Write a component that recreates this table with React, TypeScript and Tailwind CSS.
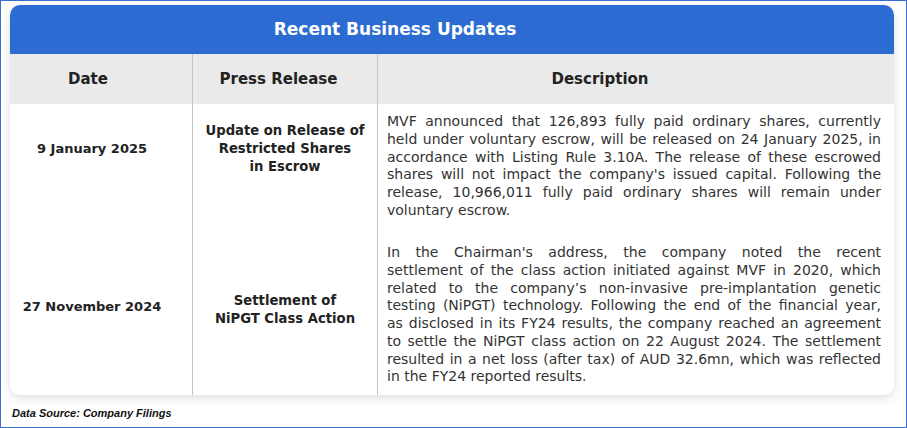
import React from "react";

const BODY_FONT = "font-['DejaVu_Sans',sans-serif]";

const rows = [
    {
        date: "9 January 2025",
        release: ["Update on Release of", "Restricted Shares", "in Escrow"],
        lines: [
            "MVF announced that 126,893 fully paid ordinary shares, currently",
            "held under voluntary escrow, will be released on 24 January 2025, in",
            "accordance with Listing Rule 3.10A. The release of these escrowed",
            "shares will not impact the company's issued capital. Following the",
            "release, 10,966,011 fully paid ordinary shares will remain under",
            "voluntary escrow.",
        ],
        rowClass: "h-[127px]",
        descClass: "pt-[9px]",
        dateClass: "pb-[38px]",
        relClass: "pb-[38px]",
    },
    {
        date: "27 November 2024",
        release: ["Settlement of", "NiPGT Class Action"],
        lines: [
            "In the Chairman's address, the company noted the recent",
            "settlement of the class action initiated against MVF in 2020, which",
            "related to the company\u2019s non-invasive pre-implantation genetic",
            "testing (NiPGT) technology. Following the end of the financial year,",
            "as disclosed in its FY24 results, the company reached an agreement",
            "to settle the NiPGT class action on 22 August 2024. The settlement",
            "resulted in a net loss (after tax) of AUD 32.6mn, which was reflected",
            "in the FY24 reported results.",
        ],
        rowClass: "h-[164px]",
        descClass: "pt-[13px]",
        dateClass: "pb-[12px]",
        relClass: "pb-[6px]",
    },
];

export default function App() {
    return (
        <div className={`h-[428px] w-[907px] overflow-hidden border border-[#3a6fd0] bg-white ${BODY_FONT}`}>
            {/* ── Card ── */}
            <div className="ml-[9px] mt-[4px] w-[884px] overflow-hidden rounded-[10px] bg-white shadow-[0_3px_10px_rgba(0,0,0,0.13)]">
                <div className="flex h-[49px] items-center justify-center bg-[#2c6cd2] pr-[114px] text-[17px] font-bold text-white">
                    Recent Business Updates
                </div>

                <div className="grid h-[50px] grid-cols-[182px_185px_517px] bg-[#eaeaea] text-[15px] font-bold text-[#222]">
                    <div className="flex items-center justify-center pr-[26px]">Date</div>
                    <div className="flex items-center justify-center border-l border-[#c4c4c4] pr-[13px]">Press Release</div>
                    <div className="flex items-center justify-center border-l border-[#c4c4c4] pr-[72px]">Description</div>
                </div>

                {rows.map((r) => (
                    <div key={r.date} className={`grid grid-cols-[182px_185px_517px] ${r.rowClass}`}>
                        <div className={`flex items-center justify-center pr-[18px] text-[13px] font-bold text-[#222] ${r.dateClass}`}>
                            {r.date}
                        </div>
                        <div
                            className={`flex flex-col items-center justify-center border-l border-[#c4c4c4] text-center text-[13.2px] font-bold leading-[18px] text-[#222] ${r.relClass}`}
                        >
                            {r.release.map((l) => (
                                <span key={l}>{l}</span>
                            ))}
                        </div>
                        <div className={`border-l border-[#c4c4c4] pl-[9px] pr-[13px] ${r.descClass}`}>
                            {r.lines.map((l, i) => (
                                <p
                                    key={i}
                                    className={`whitespace-nowrap text-[14px] leading-[17.75px] text-[#333] ${
                                        i < r.lines.length - 1 ? "text-justify [text-align-last:justify]" : "text-left"
                                    }`}
                                >
                                    {l}
                                </p>
                            ))}
                        </div>
                    </div>
                ))}
            </div>

            <p className="ml-[11px] mt-[10px] font-['Liberation_Sans',Arial,sans-serif] text-[11px] font-bold italic text-[#111]">
                Data Source: Company Filings
            </p>
        </div>
    );
}
